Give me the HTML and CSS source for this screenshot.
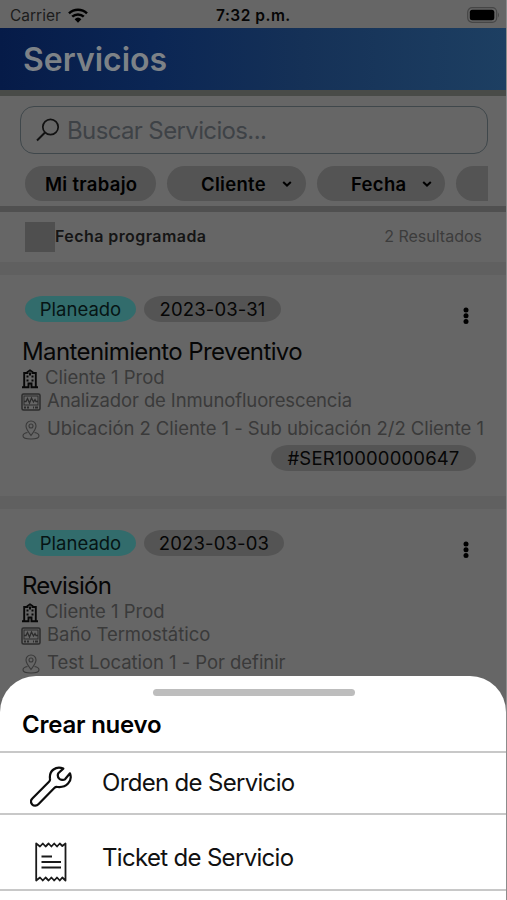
FILE: index.html
```html
<!DOCTYPE html>
<html lang="es">
<head>
<meta charset="utf-8">
<title>Servicios</title>
<link rel="stylesheet" href="styles.css">
</head>
<body>
<svg width="0" height="0" class="defs">
  <symbol id="building" viewBox="0 0 16 20"><path d="M2.2 18V4H5.5V3L8 1.3 10.5 3V4H13.8V18M0 18.3H6.5V14.5H9.5V18.3H16" fill="none" stroke="currentColor" stroke-width="1.9"/><path d="M4.5 6.5h2v2h-2zM9.5 6.5h2v2h-2zM4.5 10.5h2v2h-2zM9.5 10.5h2v2h-2zM7 3.5h2v3H7z" fill="currentColor"/></symbol>
  <symbol id="monitor" viewBox="0 0 20 18"><rect x="1" y="1" width="18" height="16" rx="1.5" fill="none" stroke="currentColor" stroke-width="1.5"/><rect x="3" y="3" width="14" height="9" fill="none" stroke="currentColor"/><path d="M3 8.5h2L6.500 5.500 8.500 10 10.500 5 12.500 9 14 6.500 15 8.500h2" fill="none" stroke="currentColor" stroke-width="1.300"/><path d="M3 14.500h2m1 0h2m4 0h1m1 0h3" stroke="currentColor" stroke-width="2"/></symbol>
  <symbol id="pin" viewBox="0 0 18 20"><path d="M9 15.500C6 11.500 4 9 4 6a5 5 0 0 1 10 0c0 3-2 5.500-5 9.500zM5.500 12.500C2.500 13 1 14.500 1 16c0 1.800 3.500 3 8 3s8-1.200 8-3c0-1.500-1.500-3-4.500-3.500" fill="none" stroke="currentColor" stroke-width="1.100"/><circle cx="9" cy="6" r="2" fill="none" stroke="currentColor" stroke-width="1.100"/></symbol>
  <symbol id="dots" viewBox="0 0 6 18"><circle cx="3" cy="3" r="2.500"/><circle cx="3" cy="8.700" r="2.500"/><circle cx="3" cy="14.400" r="2.500"/></symbol>
  <symbol id="chevron" viewBox="0 0 10 8"><path d="M1.200 2 5 5.600 8.800 2" fill="none" stroke="#000" stroke-width="2"/></symbol>
</svg>
<div class="screen">
  <div class="status">
    <div class="carrier"><span class="t-carrier">Carrier</span>
      <svg class="wifi" viewBox="0 0 20 15"><path d="M1 5.400a13 13 0 0 1 18 0M4.200 8.700a8.400 8.400 0 0 1 11.600 0" fill="none" stroke="#000" stroke-width="2.500"/><path d="M6.600 11.200a5 5 0 0 1 6.800 0L10 14.800z"/></svg>
    </div>
    <span class="time">7:32 p.m.</span>
    <svg class="battery" viewBox="0 0 33 16"><rect x=".7" y=".7" width="29" height="14.600" rx="4.500" fill="none" stroke="#464646" stroke-width="1.200"/><rect x="2.800" y="2.800" width="24.500" height="10.400" rx="2.500"/><path d="M31 5.500q2 2.500 0 5z" fill="#464646"/></svg>
  </div>
  <header class="bar"><span class="t-h1">Servicios</span></header>
  <section class="filters">
    <div class="search">
      <svg class="glass" viewBox="0 0 24 24"><circle cx="14.500" cy="9" r="7.700" fill="none" stroke="#111" stroke-width="1.700"/><path d="M9 14.500 1 22.500" stroke="#111" stroke-width="1.900"/></svg>
      <span class="t-search">Buscar Servicios...</span>
    </div>
    <div class="pills">
      <div class="pill pill-a"><span class="t-pill">Mi trabajo</span></div>
      <div class="pill pill-b"><span class="t-pill">Cliente</span><svg class="chev"><use href="#chevron"/></svg></div>
      <div class="pill pill-c"><span class="t-pill">Fecha</span><svg class="chev"><use href="#chevron"/></svg></div>
      <div class="pill pill-d"></div>
    </div>
  </section>
  <section class="sort"><i class="square"></i><span class="t-prog">Fecha programada</span><span class="t-res">2 Resultados</span></section>
  <article class="card">
    <div class="chips"><div class="chip teal">Planeado</div><div class="chip d1">2023-03-31</div><svg class="more"><use href="#dots"/></svg></div>
    <h2>Mantenimiento Preventivo</h2>
    <div class="line client"><svg class="ic-b"><use href="#building"/></svg><span>Cliente 1 Prod</span></div>
    <div class="line device"><svg class="ic-m"><use href="#monitor"/></svg><span class="t-anal">Analizador de Inmunofluorescencia</span></div>
    <div class="line place"><svg class="ic-p"><use href="#pin"/></svg><span class="t-place">Ubicación 2 Cliente 1 - Sub ubicación 2/2 Cliente 1</span></div>
    <div class="chip ser">#SER10000000647</div>
  </article>
  <article class="card">
    <div class="chips"><div class="chip teal">Planeado</div><div class="chip d2">2023-03-03</div><svg class="more"><use href="#dots"/></svg></div>
    <h2 class="t-rev">Revisión</h2>
    <div class="line client"><svg class="ic-b"><use href="#building"/></svg><span>Cliente 1 Prod</span></div>
    <div class="line device"><svg class="ic-m"><use href="#monitor"/></svg><span class="t-place">Baño Termostático</span></div>
    <div class="line place"><svg class="ic-p"><use href="#pin"/></svg><span class="t-place">Test Location 1 - Por definir</span></div>
  </article>
  <div class="sheet">
    <i class="handle"></i>
    <div class="sheet-title">Crear nuevo</div>
    <div class="option orden"><svg class="wrench" viewBox="0 0 42 42"><path d="M33.300 2.600C26-.2 19 4.500 20 12.500c.2 1.300-.2 2.500-1 3.300L2.600 32.200c-2 2-2 4.500-.4 6.200s4.500 1.600 6.200-.2L24.300 22c1-1 2-1.200 3.200-1C36 22 43 15.500 40 7.300l-5 6c-1.500 1-4.500.5-5.700-.6-1.300-1.300-1.800-3.700-1-5.400z" fill="none" stroke="#0c0c0c" stroke-width="2.200" stroke-linejoin="round"/></svg><span>Orden de Servicio</span></div>
    <div class="option ticket"><svg class="receipt" viewBox="0 0 32 42"><path d="M1.200 2.500 5 5.500l2.800-3 2.800 3 3-3 2.800 3 2.800-3 2.800 3 2.800-3 2.500 2.500 3.200-2.500v37L27.300 36.500l-2.500 3-2.800-3-2.800 3-2.800-3-2.800 3-3-3-2.800 3-2.800-3-3.800 3z" fill="none" stroke="#1a1a1a" stroke-width="1.800" stroke-linejoin="round"/><path d="M6.500 15.500H17M6.500 21H26M6.500 26.500H26" stroke="#1a1a1a" stroke-width="2"/></svg><span>Ticket de Servicio</span></div>
  </div>
</div>
</body>
</html>
```
FILE: styles.css
```css
* { box-sizing: border-box; }
body { margin: 0; font-family: Inter, "Liberation Sans", sans-serif; color: #060606; }
.defs { position: absolute; }
svg { display: block; flex: none; }
span { white-space: nowrap; }
.screen { position: relative; width: 507px; height: 900px; overflow: hidden; background: #666; border-right: 1px solid #8c8c8c; }
.status { height: 28px; display: flex; justify-content: space-between; align-items: center; padding: 2px 6px 0 10px; background: #666; }
.carrier { display: flex; align-items: center; gap: 7px; width: 206px; font-size: 15.5px; color: #1c1c1c; }
.wifi { width: 20px; height: 15px; }
.time { font-size: 15.5px; font-weight: 600; letter-spacing: .5px; flex: 1; }
.battery { width: 33px; height: 16px; }
.bar { height: 62px; padding-left: 23px; display: flex; align-items: center; background: linear-gradient(90deg, #061b48, #0b2654 30%, #153157 60%, #1d3f62); font-size: 32px; font-weight: 600; color: #7d8287; }
.filters { height: 122px; border-top: 6px solid #494b48; border-bottom: 6px solid #505050; padding: 10px 18px 0 20px; }
.search { height: 48px; border: 1.5px solid #3f474b; border-radius: 14px; display: flex; align-items: center; padding-left: 15px; gap: 7px; font-size: 24px; letter-spacing: -.63px; color: #3e4246; }
.glass { width: 24px; height: 24px; }
.pills { display: flex; margin: 12px 0 0 5px; gap: 11px; overflow: hidden; }
.pill { height: 35px; flex: none; border-radius: 18px; background: #545454; display: flex; align-items: center; font-size: 18.5px; font-weight: 600; letter-spacing: .3px; color: #000; }
.pill-a { width: 131px; padding-left: 20px; }
.pill-b { width: 139px; padding: 0 14px 0 34px; justify-content: space-between; }
.pill-c { width: 128px; padding: 0 13px 0 34px; justify-content: space-between; }
.pill-d { width: 120px; }
.chev { width: 10px; height: 8px; }
.sort { height: 50px; display: flex; align-items: center; padding: 0 24px 0 25px; font-size: 16px; }
.square { width: 30px; height: 30px; background: #4f4f4f; }
.t-prog { font-weight: 600; letter-spacing: .43px; color: #151515; padding-bottom: 2px; }
.t-res { margin-left: auto; color: #3c3c3c; padding-bottom: 3px; }
.card { height: 234px; border-top: 13px solid #606060; padding: 21px 22px 0; }
.chips { display: flex; height: 26px; margin-left: 3px; gap: 8px; }
.chip { height: 26px; border-radius: 18px / 13px; background: #545454; display: flex; align-items: center; justify-content: center; font-size: 18.5px; }
.teal { width: 111px; background: #326c6c; color: #061414; }
.d1 { width: 137px; letter-spacing: .15px; }
.d2 { width: 140px; letter-spacing: .15px; }
.more { width: 6px; height: 18px; margin: 11px 15px 0 auto; }
h2 { margin: 14px 0 0; font-size: 24px; font-weight: 400; line-height: 32px; height: 32px; letter-spacing: -.6px; white-space: nowrap; }
.t-rev { letter-spacing: -.72px; }
.line { display: flex; align-items: center; font-size: 18.5px; color: #3a3a3a; }
.client { height: 21px; margin-top: -2px; }
.device { height: 24px; margin-top: 1px; }
.place { height: 32px; }
.t-anal { letter-spacing: -.12px; }
.t-place { letter-spacing: -.05px; }
.ic-b { width: 16px; height: 20px; margin: 4px 7px 0 0; color: #080808; }
.ic-m { width: 20px; height: 18px; margin: 4px 6px 0 -1px; color: #2c2c2c; }
.ic-p { width: 18px; height: 20px; margin: 4px 7px 0 0; }
.ser { width: 205px; margin: 1px 0 0 249px; letter-spacing: .15px; }
.sheet { position: absolute; left: 0; top: 676px; width: 506px; height: 224px; background: #fff; border-radius: 36px 36px 0 0; }
.handle { display: block; width: 202px; height: 7px; margin: 13px 0 0 153px; border-radius: 4px; background: #bdbdbd; }
.sheet-title { height: 57px; border-bottom: 2px solid #c8c8c8; padding: 14px 0 0 22px; font-size: 24px; line-height: 29px; font-weight: 600; letter-spacing: -.22px; color: #000; }
.option { display: flex; border-bottom: 2px solid #c8c8c8; font-size: 24px; line-height: 30px; letter-spacing: -.68px; color: #111; }
.orden { height: 62px; padding: 15px 0 0 30px; gap: 30px; }
.ticket { height: 76px; padding: 28px 0 0 35px; gap: 35px; }
.wrench { width: 42px; height: 42px; margin-top: -2px; }
.receipt { width: 32px; height: 42px; margin-top: -2px; }
```
